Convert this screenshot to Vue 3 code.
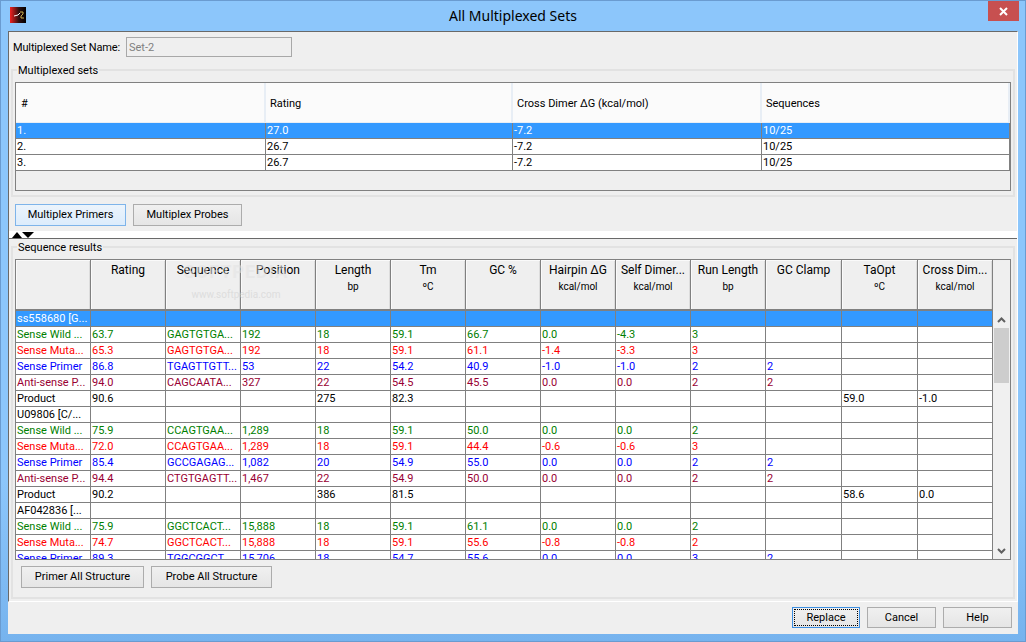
<template>
  <div class="window">
    <div class="titlebar">
      <div class="title-left">
        <svg class="app-icon" width="16" height="16" viewBox="0 0 16 16">
          <defs>
            <linearGradient id="iconGrad" x1="0" x2="1" y1="0" y2="0">
              <stop offset="0" stop-color="#f02020" />
              <stop offset="0.55" stop-color="#301010" />
              <stop offset="1" stop-color="#000" />
            </linearGradient>
          </defs>
          <rect width="16" height="16" fill="url(#iconGrad)" />
          <path d="M4 9l4-1 2-2" stroke="#fff" fill="none" />
          <path d="M10 5h3v2l-2 2v2h3" stroke="#c8b050" fill="none" />
        </svg>
      </div>
      <div class="title">All Multiplexed Sets</div>
      <div class="title-right">
        <div class="close">
          <svg width="9" height="9" viewBox="0 0 9 9">
            <path d="M1 1l7 7M8 1l-7 7" stroke="#fff" stroke-width="2" />
          </svg>
        </div>
      </div>
    </div>

    <div class="main">
      <div class="top-pane">
        <div class="name-row">
          <label>Multiplexed Set Name:</label>
          <input class="name-input" value="Set-2" disabled />
        </div>

        <fieldset class="group">
          <legend>Multiplexed sets</legend>
          <div class="sets-box">
            <table class="sets">
              <colgroup>
                <col v-for="w in setWidths" :key="w" :style="{ width: w + 'px' }" />
              </colgroup>
              <thead>
                <tr>
                  <th v-for="h in setHeaders" :key="h">{{ h }}</th>
                </tr>
              </thead>
              <tbody>
                <tr v-for="(s, i) in sets" :key="i" :class="{ selected: i === 0 }">
                  <td v-for="(v, j) in s" :key="j">{{ v }}</td>
                </tr>
              </tbody>
            </table>
          </div>
        </fieldset>

        <div class="tab-buttons">
          <button class="btn primers">Multiplex Primers</button>
          <button class="btn probes">Multiplex Probes</button>
        </div>
      </div>

      <div class="splitter">
        <span class="tri-up"></span>
        <span class="tri-down"></span>
      </div>

      <div class="bottom-pane">
        <fieldset class="group results">
          <legend>Sequence results</legend>
          <div class="seq-box">
            <div class="seq-left">
              <table class="seq">
                <colgroup>
                  <col v-for="(w, i) in seqWidths" :key="i" :style="{ width: w + 'px' }" />
                </colgroup>
                <thead>
                  <tr>
                    <th v-for="(h, i) in seqHeaders" :key="i">
                      <div class="h-main">{{ h[0] }}</div>
                      <div class="h-unit">{{ h[1] }}</div>
                    </th>
                  </tr>
                </thead>
              </table>
              <div class="seq-body">
                <table class="seq">
                  <colgroup>
                    <col v-for="(w, i) in seqWidths" :key="i" :style="{ width: w + 'px' }" />
                  </colgroup>
                  <tbody>
                    <tr v-for="(r, i) in rows" :key="i" :class="[r.kind, { selected: i === 0 }]">
                      <td v-for="n in 13" :key="n">{{ r.cells[n - 1] }}</td>
                    </tr>
                  </tbody>
                </table>
              </div>
            </div>
            <div class="scroll-col">
              <div class="scroll-filler"></div>
              <div class="scrollbar">
                <div class="arrow">
                  <svg width="9" height="6" viewBox="0 0 9 6">
                    <path d="M1 5l3.5-3.5L8 5" stroke="#606060" stroke-width="2" fill="none" />
                  </svg>
                </div>
                <div class="thumb"></div>
                <div class="track"></div>
                <div class="arrow">
                  <svg width="9" height="6" viewBox="0 0 9 6">
                    <path d="M1 1l3.5 3.5L8 1" stroke="#606060" stroke-width="2" fill="none" />
                  </svg>
                </div>
              </div>
            </div>
            <div class="watermark">
              <div class="wm-logo">SOFTPEDIA</div>
              <div class="wm-url">www.softpedia.com</div>
            </div>
          </div>
          <div class="structure-buttons">
            <button class="btn primer-all">Primer All Structure</button>
            <button class="btn probe-all">Probe All Structure</button>
          </div>
        </fieldset>
      </div>
    </div>

    <div class="footer">
      <button class="btn foot replace"><span>Replace</span></button>
      <button class="btn foot">Cancel</button>
      <button class="btn foot">Help</button>
    </div>
  </div>
</template>

<script setup>
const setWidths = [250, 247, 249, 248];
const setHeaders = ['#', 'Rating', 'Cross Dimer ΔG (kcal/mol)', 'Sequences'];
const sets = [
  ['1.', '27.0', '-7.2', '10/25'],
  ['2.', '26.7', '-7.2', '10/25'],
  ['3.', '26.7', '-7.2', '10/25'],
];

const seqWidths = [75, 75, 75, 75, 75, 75, 75, 75, 75, 75, 76, 76, 75];
const seqHeaders = [
  ['', ''],
  ['Rating', ''],
  ['Sequence', ''],
  ['Position', ''],
  ['Length', 'bp'],
  ['Tm', 'ºC'],
  ['GC %', ''],
  ['Hairpin ΔG', 'kcal/mol'],
  ['Self Dimer...', 'kcal/mol'],
  ['Run Length', 'bp'],
  ['GC Clamp', ''],
  ['TaOpt', 'ºC'],
  ['Cross Dim...', 'kcal/mol'],
];

const group = (name) => ({ kind: 'plain', cells: [name] });
const wild = (...c) => ({ kind: 'wild', cells: ['Sense Wild ...', ...c] });
const muta = (...c) => ({ kind: 'muta', cells: ['Sense Muta...', ...c] });
const sense = (...c) => ({ kind: 'sense', cells: ['Sense Primer', ...c] });
const anti = (...c) => ({ kind: 'anti', cells: ['Anti-sense P...', ...c] });
const product = (rating, len, tm, ta, cross) => ({
  kind: 'plain',
  cells: ['Product', rating, '', '', len, tm, '', '', '', '', '', ta, cross],
});

const rows = [
  group('ss558680 [G...'),
  wild('63.7', 'GAGTGTGA...', '192', '18', '59.1', '66.7', '0.0', '-4.3', '3'),
  muta('65.3', 'GAGTGTGA...', '192', '18', '59.1', '61.1', '-1.4', '-3.3', '3'),
  sense('86.8', 'TGAGTTGTT...', '53', '22', '54.2', '40.9', '-1.0', '-1.0', '2', '2'),
  anti('94.0', 'CAGCAATA...', '327', '22', '54.5', '45.5', '0.0', '0.0', '2', '2'),
  product('90.6', '275', '82.3', '59.0', '-1.0'),
  group('U09806 [C/...'),
  wild('75.9', 'CCAGTGAA...', '1,289', '18', '59.1', '50.0', '0.0', '0.0', '2'),
  muta('72.0', 'CCAGTGAA...', '1,289', '18', '59.1', '44.4', '-0.6', '-0.6', '3'),
  sense('85.4', 'GCCGAGAG...', '1,082', '20', '54.9', '55.0', '0.0', '0.0', '2', '2'),
  anti('94.4', 'CTGTGAGTT...', '1,467', '22', '54.9', '50.0', '0.0', '0.0', '2', '2'),
  product('90.2', '386', '81.5', '58.6', '0.0'),
  group('AF042836 [...'),
  wild('75.9', 'GGCTCACT...', '15,888', '18', '59.1', '61.1', '0.0', '0.0', '2'),
  muta('74.7', 'GGCTCACT...', '15,888', '18', '59.1', '55.6', '-0.8', '-0.8', '2'),
  sense('89.3', 'TGGCGGCT', '15,706', '18', '54.7', '55.6', '0.0', '0.0', '3', '2'),
];
</script>

<style>
html,
body {
  margin: 0;
  background: #8cc6fb;
}
</style>

<style scoped>
.window {
  width: 1026px;
  height: 642px;
  box-sizing: border-box;
  border: 1px solid #6a9bd0;
  background: linear-gradient(#8cc6fb 75%, #76b3ee);
  display: flex;
  flex-direction: column;
  padding: 0 7px;
  font-family: Roboto, "Liberation Sans", sans-serif;
  font-size: 11px;
  color: #000;
}
.titlebar {
  height: 30px;
  flex: none;
  display: grid;
  grid-template-columns: 1fr auto 1fr;
  margin: 0 -7px;
}
.title-left {
  padding: 6px 0 0 9px;
}
.app-icon {
  display: block;
}
.title {
  font-family: "Noto Sans", sans-serif;
  font-size: 14px;
  line-height: 30px;
}
.title-right {
  display: flex;
  justify-content: flex-end;
  padding-right: 6px;
}
.close {
  width: 31px;
  height: 20px;
  background: #c75050;
  display: flex;
  align-items: center;
  justify-content: center;
}

.main {
  height: 571px;
  flex: none;
  box-sizing: border-box;
  background: #efefef;
  border-top: 1px solid #696969;
  border-left: 1px solid #696969;
  border-right: 1px solid #fff;
  border-bottom: 1px solid #fff;
  display: flex;
  flex-direction: column;
}
.top-pane {
  height: 199px;
  flex: none;
  box-sizing: border-box;
  padding: 5px 0 0 2px;
}
.name-row {
  height: 20px;
  display: flex;
  align-items: center;
  padding-left: 2px;
}
.name-row label {
  width: 113px;
  white-space: nowrap;
  letter-spacing: -0.15px;
}
.name-input {
  width: 166px;
  height: 20px;
  box-sizing: border-box;
  border: 1px solid #a8a8a8;
  background: #efefef;
  color: #808080;
  font: inherit;
  padding: 0 2px;
  margin: 0;
}

.group {
  margin: 6px 0 0;
  padding: 5px 2px 4px;
  width: 1004px;
  box-sizing: border-box;
  border: 2px solid #e2e2e2;
  min-width: 0;
}
.group legend {
  padding: 2px 1px 0;
  margin-left: 2px;
  line-height: 12px;
}

.sets-box {
  height: 109px;
  box-sizing: border-box;
  border: 1px solid #808080;
}
table {
  border-collapse: separate;
  border-spacing: 0;
  table-layout: fixed;
}
.sets {
  width: 994px;
}
.sets th {
  height: 40px;
  box-sizing: border-box;
  background: #fbfbfb;
  border-right: 2px solid #e8eef5;
  border-bottom: 1px solid #e8eef5;
  font-weight: normal;
  text-align: left;
  padding: 2px 0 0 4px;
}
.sets th:first-child {
  padding-left: 5px;
}
.sets td {
  height: 16px;
  box-sizing: border-box;
  background: #fff;
  border-right: 1px solid #808080;
  border-bottom: 1px solid #808080;
  padding: 0 0 0 1px;
  line-height: 14px;
  white-space: nowrap;
  overflow: hidden;
}
.sets tr.selected td,
.seq tr.selected td {
  background: #3399ff;
  color: #fff;
}

.tab-buttons {
  display: flex;
  gap: 7px;
  padding: 7px 0 0 4px;
}
.btn {
  box-sizing: border-box;
  border: 1px solid #acacac;
  background: linear-gradient(#f0f0f0, #e5e5e5);
  font: inherit;
  color: #000;
  padding: 0 0 2px;
  margin: 0;
  height: 22px;
}
.primers {
  width: 111px;
  border-color: #7eb4ea;
  background: linear-gradient(#ecf4fc, #dcecfc);
}
.probes {
  width: 109px;
}

.splitter {
  height: 7px;
  flex: none;
  background: #fff;
  display: flex;
  align-items: flex-end;
  padding-left: 3px;
}
.tri-up {
  width: 0;
  height: 0;
  border-left: 5.5px solid transparent;
  border-right: 5.5px solid transparent;
  border-bottom: 6px solid #000;
}
.tri-down {
  width: 0;
  height: 0;
  border-left: 6px solid transparent;
  border-right: 6px solid transparent;
  border-top: 6px solid #000;
}

.bottom-pane {
  flex: 1;
  border-top: 1px solid #696969;
  padding: 1px 0 0 2px;
}
.group.results {
  margin: 0;
  padding-bottom: 9px;
}
.seq-box {
  position: relative;
  height: 301px;
  box-sizing: border-box;
  border: 1px solid #808080;
  display: flex;
  overflow: hidden;
}
.seq-left {
  width: 977px;
  flex: none;
  display: flex;
  flex-direction: column;
}
.seq {
  width: 977px;
}
.seq th {
  height: 51px;
  box-sizing: border-box;
  background: #efefef;
  border-right: 1px solid #808080;
  border-bottom: 2px solid #808080;
  box-shadow: inset 1px 1px 0 #fafafa, inset -1px 0 0 #dcdcdc;
  font-weight: normal;
  vertical-align: top;
  padding: 0;
  overflow: hidden;
  white-space: nowrap;
}
.h-main {
  font-size: 12px;
  line-height: 16px;
  margin-top: 2px;
}
.h-unit {
  font-size: 10px;
  line-height: 14px;
  margin-top: 2px;
}
.seq-body {
  height: 248px;
  overflow: hidden;
  background: #fff;
}
.seq td {
  height: 16px;
  box-sizing: border-box;
  background: #fff;
  border-right: 1px solid #808080;
  border-bottom: 1px solid #808080;
  padding: 0 0 0 1px;
  line-height: 14px;
  white-space: nowrap;
  overflow: hidden;
}
.wild td {
  color: #008000;
}
.muta td {
  color: #ff0000;
}
.sense td {
  color: #0000ff;
}
.anti td {
  color: #990033;
}
.scroll-col {
  width: 17px;
  flex: none;
  display: flex;
  flex-direction: column;
}
.scroll-filler {
  height: 51px;
  flex: none;
}
.scrollbar {
  flex: 1;
  display: flex;
  flex-direction: column;
  background: #f0f0f0;
}
.arrow {
  height: 17px;
  flex: none;
  display: flex;
  align-items: center;
  justify-content: center;
}
.thumb {
  height: 55px;
  flex: none;
  margin: 0 1px;
  background: #cdcdcd;
}
.track {
  flex: 1;
}
.watermark {
  position: absolute;
  left: 150px;
  top: 2px;
  width: 140px;
  text-align: center;
  pointer-events: none;
  opacity: 0.55;
}
.wm-logo {
  font-size: 18px;
  font-weight: bold;
  line-height: 20px;
  letter-spacing: 1px;
  color: #e4e4e4;
}
.wm-url {
  font-size: 10px;
  line-height: 12px;
  margin-top: 7px;
  color: #cfcfcf;
}
.structure-buttons {
  display: flex;
  gap: 7px;
  padding: 6px 0 0 6px;
}
.primer-all {
  width: 123px;
}
.probe-all {
  width: 121px;
}

.footer {
  flex: 1;
  background: #efefef;
  display: flex;
  justify-content: flex-end;
  gap: 7px;
  padding: 5px 6px 0 0;
  margin-bottom: 7px;
}
.foot {
  width: 69px;
  height: 21px;
  padding: 0;
}
.replace {
  width: 68px;
  border-color: #3d8ee0;
  padding: 1px;
}
.replace span {
  display: block;
  height: 100%;
  line-height: 15px;
  box-sizing: border-box;
  border: 1px dotted #000;
}
</style>
